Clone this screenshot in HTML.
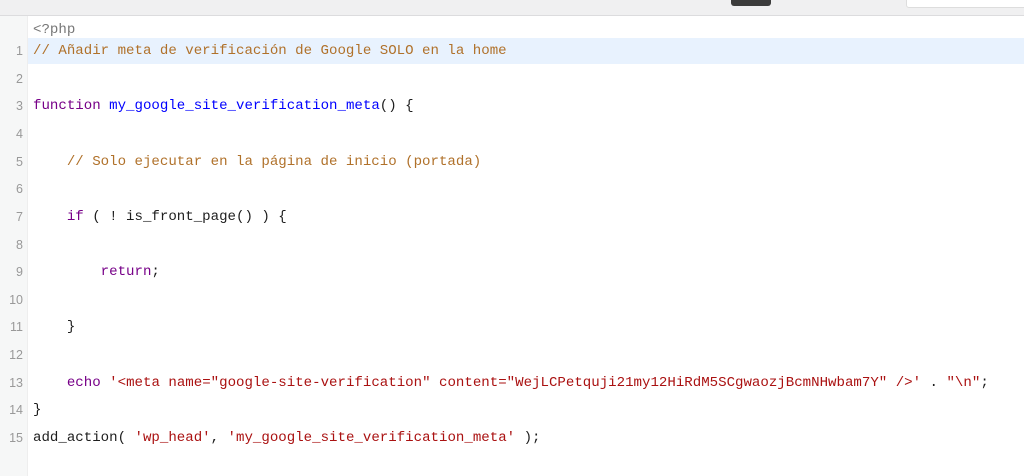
<!DOCTYPE html>
<html><head><meta charset="utf-8"><style>
body{margin:0;width:1024px;height:474px;overflow:hidden;background:#fff;font-family:"Liberation Mono",monospace;font-size:14.1px;position:relative}
.top{position:absolute;left:0;top:0;width:1024px;height:15px;background:#f0f0f1;border-bottom:1px solid #dcdcde}
.btn{position:absolute;left:731px;top:-4px;width:40px;height:10px;background:#3c3c3c;border-radius:3px}
.inp{position:absolute;left:906px;top:-4px;width:130px;height:10px;background:#fff;border:1px solid #ddd;border-radius:3px}
.gut{position:absolute;left:0;top:16px;width:27px;height:460px;background:#f6f7f7;border-right:1px solid #eee}
.hl{position:absolute;left:28px;top:38px;width:996px;height:26px;background:#e8f2fe}
.l{position:absolute;left:33px;height:20px;line-height:20px;white-space:pre;color:#1d1d1d}
.n{position:absolute;left:0;width:23px;text-align:right;height:20px;line-height:20px;color:#999;font-family:"Liberation Sans",sans-serif;font-size:12.5px}
.c{color:#b0712a}.k{color:#770088}.d{color:#0000ff}.s{color:#aa1111}.m{color:#777}
</style></head><body>
<div class="top"><div class="btn"></div><div class="inp"></div></div>
<div class="gut"></div>
<div class="hl"></div>
<div class="l m" style="top:20px">&lt;?php</div>
<div class="n" style="top:41px">1</div><div class="l c" style="top:41px">// Añadir meta de verificación de Google SOLO en la home</div>
<div class="n" style="top:69px">2</div>
<div class="n" style="top:96px">3</div><div class="l" style="top:96px"><span class="k">function</span> <span class="d">my_google_site_verification_meta</span>() {</div>
<div class="n" style="top:124px">4</div>
<div class="n" style="top:152px">5</div><div class="l c" style="top:152px">    // Solo ejecutar en la página de inicio (portada)</div>
<div class="n" style="top:179px">6</div>
<div class="n" style="top:207px">7</div><div class="l" style="top:207px">    <span class="k">if</span> ( ! is_front_page() ) {</div>
<div class="n" style="top:235px">8</div>
<div class="n" style="top:262px">9</div><div class="l" style="top:262px">        <span class="k">return</span>;</div>
<div class="n" style="top:290px">10</div>
<div class="n" style="top:317px">11</div><div class="l" style="top:317px">    }</div>
<div class="n" style="top:345px">12</div>
<div class="n" style="top:373px">13</div><div class="l" style="top:373px">    <span class="k">echo</span> <span class="s">'&lt;meta name="google-site-verification" content="WejLCPetquji21my12HiRdM5SCgwaozjBcmNHwbam7Y" /&gt;'</span> . <span class="s">"\n"</span>;</div>
<div class="n" style="top:400px">14</div><div class="l" style="top:400px">}</div>
<div class="n" style="top:428px">15</div><div class="l" style="top:428px">add_action( <span class="s">'wp_head'</span>, <span class="s">'my_google_site_verification_meta'</span> );</div>
</body></html>
